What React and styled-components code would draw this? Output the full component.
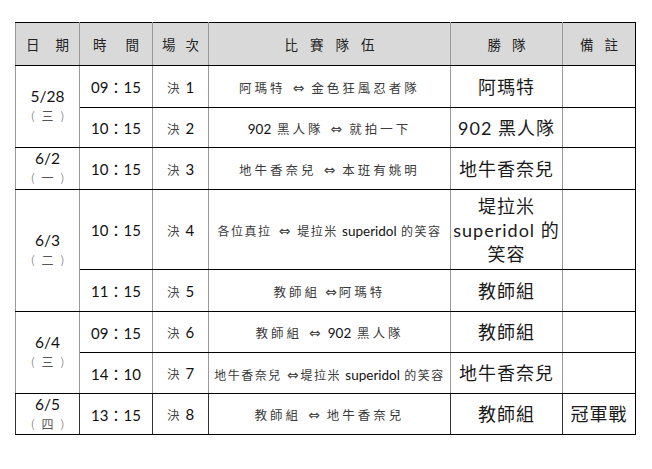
import React from "react";
import styled, { createGlobalStyle } from "styled-components";

const GlobalStyle = createGlobalStyle`
  html, body {
    margin: 0;
    padding: 0;
    background: #ffffff;
  }
  body {
    font-family: "Lato", "Noto Sans CJK TC", sans-serif;
    color: #1a1a1a;
  }
`;

const schedule = [
  {
    date: "5/28",
    weekday: "三",
    games: [
      { time: "09：15", no: "1", teams: ["阿瑪特", "金色狂風忍者隊"], winner: "阿瑪特", h: 42 },
      { time: "10：15", no: "2", teams: ["902 黑人隊", "就拍一下"], winner: "902 黑人隊", h: 40 },
    ],
  },
  {
    date: "6/2",
    weekday: "一",
    games: [
      { time: "10：15", no: "3", teams: ["地牛香奈兒", "本班有姚明"], winner: "地牛香奈兒", h: 42 },
    ],
  },
  {
    date: "6/3",
    weekday: "二",
    games: [
      {
        time: "10：15",
        no: "4",
        teams: ["各位真拉", "堤拉米 superidol 的笑容"],
        tight: true,
        winner: ["堤拉米", "superidol 的", "笑容"],
        h: 80,
      },
      { time: "11：15", no: "5", teams: ["教師組", "阿瑪特"], joined: true, winner: "教師組", h: 42 },
    ],
  },
  {
    date: "6/4",
    weekday: "三",
    games: [
      { time: "09：15", no: "6", teams: ["教師組", "902 黑人隊"], winner: "教師組", h: 41 },
      {
        time: "14：10",
        no: "7",
        teams: ["地牛香奈兒", "堤拉米 superidol 的笑容"],
        tight: true,
        joined: true,
        winner: "地牛香奈兒",
        h: 41,
      },
    ],
  },
  {
    date: "6/5",
    weekday: "四",
    last: true,
    games: [
      { time: "13：15", no: "8", teams: ["教師組", "地牛香奈兒"], winner: "教師組", note: "冠軍戰", h: 41 },
    ],
  },
];

const headers = [
  { label: "日期", gap: 16 },
  { label: "時間", gap: 19 },
  { label: "場次", gap: 10 },
  { label: "比賽隊伍", gap: 12 },
  { label: "勝隊", gap: 11 },
  { label: "備註", gap: 11 },
];

// latin runs keep their natural spacing, CJK gets the wide spacing
function TeamName({ text }) {
  return text
    .split(/([A-Za-z0-9]+)/)
    .filter(Boolean)
    .map((part, i) =>
      /[A-Za-z0-9]/.test(part) ? <Latin key={i}>{part}</Latin> : <span key={i}>{part}</span>
    );
}

function App() {
  return (
    <>
      <GlobalStyle />
      <Page>
        <Table>
          <colgroup>
            <col style={{ width: 64 }} />
            <col style={{ width: 73 }} />
            <col style={{ width: 56 }} />
            <col style={{ width: 242 }} />
            <col style={{ width: 112 }} />
            <col style={{ width: 73 }} />
          </colgroup>
          <thead>
            <tr>
              {headers.map((h, i) => (
                <Head key={h.label} $last={i === headers.length - 1}>
                  <HeadText $gap={h.gap}>{h.label}</HeadText>
                </Head>
              ))}
            </tr>
          </thead>
          <tbody>
            {schedule.map((day) =>
              day.games.map((g, i) => (
                <tr key={day.date + i}>
                  {i === 0 && (
                    <DateCell rowSpan={day.games.length} $dark={day.last}>
                      <DateNum>{day.date}</DateNum>
                      <Weekday>
                        <Paren $side="left">(</Paren>
                        {day.weekday}
                        <Paren $side="right">)</Paren>
                      </Weekday>
                    </DateCell>
                  )}
                  <Cell $dark={day.last} style={{ height: g.h - 1 }}>
                    <Time>{g.time}</Time>
                  </Cell>
                  <Cell $dark={day.last}>
                    <Round>
                      <Cjk>決</Cjk>
                      {g.no}
                    </Round>
                  </Cell>
                  <Cell $dark={day.last}>
                    <Teams $tight={g.tight}>
                      <TeamName text={g.teams[0]} />
                      <Arrow $joined={g.joined}>⇔</Arrow>
                      <TeamName text={g.teams[1]} />
                    </Teams>
                  </Cell>
                  <Cell $dark={day.last}>
                    <Winner>
                      {Array.isArray(g.winner)
                        ? g.winner.map((line) => <div key={line}>{line}</div>)
                        : g.winner}
                    </Winner>
                  </Cell>
                  <Cell $last $dark={day.last}>
                    {g.note && <Winner>{g.note}</Winner>}
                  </Cell>
                </tr>
              ))
            )}
          </tbody>
        </Table>
      </Page>
    </>
  );
}

export default App;

const Page = styled.div`
  padding: 22px 0 0 15px;
`;

const Table = styled.table`
  border-collapse: collapse;
  table-layout: fixed;
  width: 621px;
`;

const Head = styled.th`
  height: 42px;
  padding: 0;
  background: #d9d9d9;
  border-top: 1px solid #000;
  border-bottom: 1px solid #000;
  border-left: 1px solid #9a9a9a;
  border-right: 1px solid ${(p) => (p.$last ? "#000" : "#9a9a9a")};
  font-family: "Noto Sans CJK TC", sans-serif;
  font-weight: 400;
  font-size: 13.5px;
  color: #222;
  text-align: center;
  white-space: nowrap;
`;

const HeadText = styled.span`
  letter-spacing: ${(p) => p.$gap}px;
  margin-right: -${(p) => p.$gap}px;
`;

const Cell = styled.td`
  padding: 0;
  text-align: center;
  vertical-align: middle;
  border-top: 1px solid #000;
  border-bottom: 1px solid #000;
  border-left: 1px solid ${(p) => (p.$dark ? "#333" : "#9a9a9a")};
  border-right: 1px solid ${(p) => (p.$last ? "#000" : p.$dark ? "#333" : "#9a9a9a")};
`;

const DateCell = styled(Cell)`
  line-height: 19px;
`;

const DateNum = styled.div`
  font-size: 15.5px;
  color: #111;
`;

const Weekday = styled.div`
  font-family: "Noto Sans CJK TC", sans-serif;
  font-size: 12px;
  color: #555;
`;

const Paren = styled.span`
  font-family: "DejaVu Sans", sans-serif;
  font-size: 13px;
  font-weight: 300;
  color: #666;
  ${(p) => (p.$side === "left" ? "margin-right: 6px;" : "margin-left: 6px;")}
`;

const Time = styled.span`
  font-size: 15px;
  color: #111;
`;

const Cjk = styled.span`
  font-family: "Noto Sans CJK TC", sans-serif;
  font-size: 12.5px;
  color: #444;
  margin-right: 6px;
`;

const Round = styled.span`
  font-size: 15px;
  color: #111;
`;

const Teams = styled.span`
  font-family: "Noto Sans CJK TC", sans-serif;
  font-size: ${(p) => (p.$tight ? "12px" : "12.5px")};
  letter-spacing: ${(p) => (p.$tight ? "1.5px" : "3px")};
  color: #3a3a3a;
  white-space: nowrap;
`;

const Latin = styled.span`
  font-family: "Lato", sans-serif;
  font-size: 13.5px;
  letter-spacing: 0;
  color: #111;
`;

const Arrow = styled.span`
  font-family: "DejaVu Sans", sans-serif;
  font-size: 14px;
  color: #444;
  letter-spacing: 0;
  margin: ${(p) => (p.$joined ? "0 2px 0 5px" : "0 7px")};
`;

const Winner = styled.div`
  font-family: "Lato", "Noto Sans CJK TC", sans-serif;
  font-size: 18px;
  line-height: 24px;
  letter-spacing: 1px;
  color: #1a1a1a;
`;
